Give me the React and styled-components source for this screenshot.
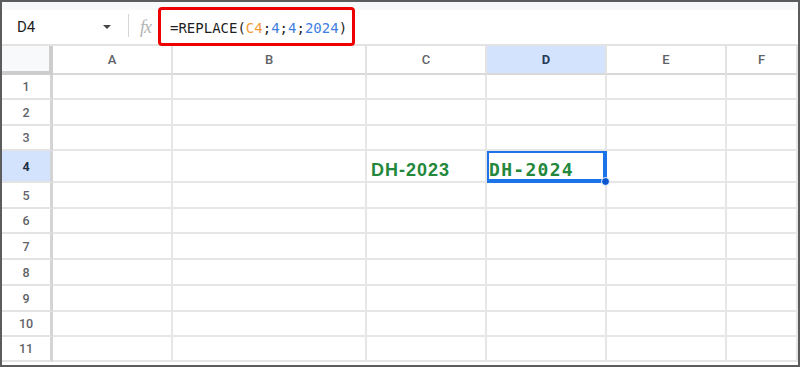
import React from 'react';
import styled, { createGlobalStyle, css } from 'styled-components';

const GlobalStyle = createGlobalStyle`
  html, body {
    margin: 0;
    padding: 0;
    background: #fff;
  }
  * {
    box-sizing: border-box;
  }
`;

const COLUMNS = ['A', 'B', 'C', 'D', 'E', 'F'];
const COL_WIDTHS = '51px 120px 194px 120px 120px 120px 1fr';
const ROW_HEIGHTS = [25, 26, 25, 32, 26, 25, 26, 26, 26, 25, 25];

const SELECTED_COL = 'D';
const SELECTED_ROW = 4;

const CELLS = {
  C4: { value: 'DH-2023', kind: 'text' },
  D4: { value: 'DH-2024', kind: 'mono' },
};

export default function App() {
  return (
    <>
      <GlobalStyle />
      <Frame>
        <FormulaBar>
          <NameBox>
            <span>D4</span>
            <DropArrow />
          </NameBox>
          <Divider />
          <FxLabel>fx</FxLabel>
          <FormulaInput>
            <Token>=REPLACE(</Token>
            <Token $color="#f09a38">C4</Token>
            <Token>;</Token>
            <Token $color="#3f7fe0">4</Token>
            <Token>;</Token>
            <Token $color="#3f7fe0">4</Token>
            <Token>;</Token>
            <Token $color="#3f7fe0">2024</Token>
            <Token>)</Token>
          </FormulaInput>
        </FormulaBar>

        <Sheet>
          <Corner />
          {COLUMNS.map((col) => (
            <ColHeader key={col} $selected={col === SELECTED_COL}>
              {col}
            </ColHeader>
          ))}

          {ROW_HEIGHTS.map((height, i) => {
            const row = i + 1;
            return (
              <React.Fragment key={row}>
                <RowHeader $height={height} $selected={row === SELECTED_ROW}>
                  {row}
                </RowHeader>
                {COLUMNS.map((col) => {
                  const ref = `${col}${row}`;
                  const cell = CELLS[ref];
                  const active = ref === `${SELECTED_COL}${SELECTED_ROW}`;
                  return (
                    <Cell key={ref} $height={height} $active={active}>
                      {cell && <CellText $kind={cell.kind}>{cell.value}</CellText>}
                      {active && <FillHandle />}
                    </Cell>
                  );
                })}
              </React.Fragment>
            );
          })}
        </Sheet>
      </Frame>
    </>
  );
}

const Frame = styled.div`
  width: 800px;
  height: 367px;
  border: 2px solid #5c5c5c;
  display: flex;
  flex-direction: column;
  overflow: hidden;
  background: #fff;
`;

const FormulaBar = styled.div`
  height: 44px;
  flex-shrink: 0;
  display: flex;
  align-items: center;
  padding-top: 8px;
  background: linear-gradient(#f8f9fb 0 8px, #fff 8px);
  border-bottom: 2px solid #e3e3e3;
`;

const NameBox = styled.div`
  width: 126px;
  height: 100%;
  display: flex;
  align-items: center;
  justify-content: space-between;
  padding: 0 17px 0 15px;
  font-family: Roboto, 'Liberation Sans', sans-serif;
  font-size: 15px;
  color: #1f1f1f;
`;

const DropArrow = styled.span`
  width: 0;
  height: 0;
  border-left: 4px solid transparent;
  border-right: 4px solid transparent;
  border-top: 4px solid #444746;
`;

const Divider = styled.div`
  width: 1px;
  height: 23px;
  background: #d6d6d6;
  margin-top: -4px;
`;

const FxLabel = styled.span`
  width: 29px;
  padding-left: 11px;
  font-family: 'Liberation Serif', serif;
  font-style: italic;
  font-size: 18px;
  color: #b4b4b4;
  letter-spacing: -1px;
`;

const FormulaInput = styled.div`
  align-self: stretch;
  margin: -3px 0 -2px;
  width: 197px;
  display: flex;
  align-items: center;
  padding: 2px 0 0 9px;
  border: 3px solid #ee0000;
  border-radius: 4px;
  font-family: 'DejaVu Sans Mono', 'Liberation Mono', monospace;
  font-size: 14px;
  white-space: pre;
`;

const Token = styled.span`
  color: ${(p) => p.$color || '#1f1f1f'};
`;

const Sheet = styled.div`
  flex: 1;
  display: grid;
  grid-template-columns: ${COL_WIDTHS};
  grid-auto-rows: min-content;
  overflow: hidden;
  font-family: Roboto, 'Liberation Sans', sans-serif;
`;

const Corner = styled.div`
  height: 29px;
  background: #f8f9fa;
  border-right: 4px solid #cdcdcd;
  border-bottom: 4px solid #cdcdcd;
`;

const ColHeader = styled.div`
  height: 29px;
  display: flex;
  align-items: center;
  justify-content: center;
  padding-bottom: 1px;
  font-size: 13px;
  font-weight: 500;
  color: #5f6368;
  background: #fff;
  border-right: 2px solid #e3e3e3;
  border-bottom: 2px solid #d9d9d9;
  ${(p) =>
    p.$selected &&
    css`
      background: #d3e3fd;
      color: #263a57;
      font-weight: 700;
    `}
`;

const RowHeader = styled.div`
  height: ${(p) => p.$height}px;
  display: flex;
  align-items: center;
  justify-content: center;
  font-size: 12.5px;
  font-weight: 500;
  color: #5f6368;
  background: #fff;
  border-right: 3px solid #d4d4d4;
  border-bottom: 2px solid #e3e3e3;
  ${(p) =>
    p.$selected &&
    css`
      background: #d3e3fd;
      color: #1f2d44;
      font-weight: 700;
    `}
`;

const Cell = styled.div`
  position: relative;
  height: ${(p) => p.$height}px;
  display: flex;
  align-items: flex-end;
  padding: 0 0 2px 4px;
  border-right: 2px solid #e6e6e6;
  border-bottom: 2px solid #e6e6e6;
  ${(p) =>
    p.$active &&
    css`
      border-color: #1a73e8;
      box-shadow: inset 0 0 0 2px #1a73e8;
      padding-left: 2px;
    `}
`;

const CellText = styled.span`
  color: #23883c;
  font-weight: 700;
  white-space: nowrap;
  line-height: 1;
  ${(p) =>
    p.$kind === 'mono'
      ? css`
          font-family: 'DejaVu Sans Mono', 'Liberation Mono', monospace;
          font-size: 18px;
          letter-spacing: 1.3px;
        `
      : css`
          font-family: 'Liberation Sans', Arial, sans-serif;
          font-size: 18px;
          letter-spacing: 1px;
        `}
`;

const FillHandle = styled.span`
  position: absolute;
  right: -5px;
  bottom: -5px;
  width: 9px;
  height: 9px;
  border-radius: 50%;
  background: #0b57d0;
  border: 1px solid #fff;
  z-index: 2;
`;
